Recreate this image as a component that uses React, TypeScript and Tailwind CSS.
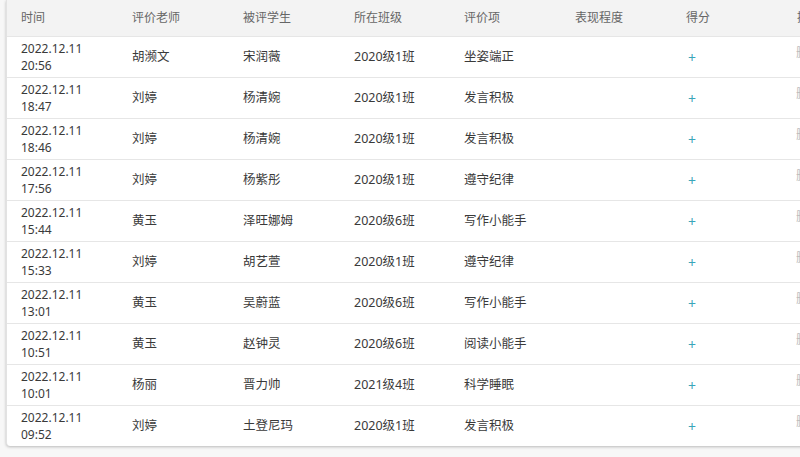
const rows = [
  ["2022.12.11", "20:56", "胡濒文", "宋润薇", "2020级1班", "坐姿端正"],
  ["2022.12.11", "18:47", "刘婷", "杨清婉", "2020级1班", "发言积极"],
  ["2022.12.11", "18:46", "刘婷", "杨清婉", "2020级1班", "发言积极"],
  ["2022.12.11", "17:56", "刘婷", "杨紫彤", "2020级1班", "遵守纪律"],
  ["2022.12.11", "15:44", "黄玉", "泽旺娜姆", "2020级6班", "写作小能手"],
  ["2022.12.11", "15:33", "刘婷", "胡艺萱", "2020级1班", "遵守纪律"],
  ["2022.12.11", "13:01", "黄玉", "吴蔚蓝", "2020级6班", "写作小能手"],
  ["2022.12.11", "10:51", "黄玉", "赵钟灵", "2020级6班", "阅读小能手"],
  ["2022.12.11", "10:01", "杨丽", "晋力帅", "2021级4班", "科学睡眠"],
  ["2022.12.11", "09:52", "刘婷", "土登尼玛", "2020级1班", "发言积极"],
]

const headers = ["时间", "评价老师", "被评学生", "所在班级", "评价项", "表现程度", "得分", "操作"]

export default function App() {
  return (
    <div
      className="h-[457px] w-[800px] overflow-hidden bg-[#f7f7f7]"
      style={{ fontFamily: '"Noto Sans", "Noto Sans CJK SC", sans-serif' }}
    >
      <div className="ml-[6px] w-[900px] overflow-hidden rounded-b-[4px] border-l border-[#e2e2e2] bg-white shadow-[0_1px_3px_rgba(0,0,0,0.25)]">
        <div className="grid h-[36px] grid-cols-[111px_111px_111px_110px_111px_111px_111px_124px] items-center bg-[#f3f3f3] text-[12px] text-[#666]">
          {headers.map((h) => (
            <div key={h} className="pl-[14px]">
              {h}
            </div>
          ))}
        </div>
        {rows.map((r, i) => (
          <div
            key={i}
            className="grid h-[41px] grid-cols-[111px_111px_111px_110px_111px_111px_111px_124px] items-center border-t border-[#e6e6e6] text-[12.5px] text-[#3a3a3a]"
          >
            <div className="pl-[14px] text-[12px] leading-[17px]">
              <div>{r[0]}</div>
              <div>{r[1]}</div>
            </div>
            <div className="pl-[14px]">{r[2]}</div>
            <div className="pl-[14px]">{r[3]}</div>
            <div className="pl-[14px]">{r[4]}</div>
            <div className="pl-[14px]">{r[5]}</div>
            <div className="pl-[14px]"></div>
            <div className="pl-[16px] text-[14px] text-[#3aa6b9]">+</div>
            <div className="self-start pt-[7px] pl-[13px] text-[12px] text-[#bbb]">删除</div>
          </div>
        ))}
      </div>
    </div>
  )
}
